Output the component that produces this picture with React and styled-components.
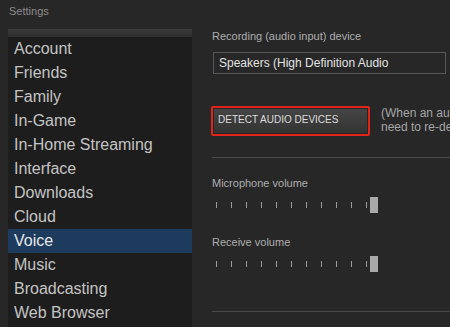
import React from 'react';
import styled, { createGlobalStyle } from 'styled-components';

const GlobalStyle = createGlobalStyle`
  html, body {
    margin: 0;
    padding: 0;
    background: #272727;
    overflow: hidden;
  }
  body {
    font-family: "Liberation Sans", Arial, sans-serif;
  }
`;

const Window = styled.div`
  width: 450px;
  height: 327px;
  background: #272727;
  display: flex;
  flex-direction: column;
  overflow: hidden;
`;

const TitleBar = styled.div`
  height: 29px;
  padding: 5px 0 0 9px;
  box-sizing: border-box;
  font-size: 11px;
  color: #8c8c8c;
`;

const Body = styled.div`
  display: flex;
  flex: 1;
  min-height: 0;
`;

const Sidebar = styled.div`
  width: 184px;
  margin-left: 8px;
  background: #1d1d1d;
  display: flex;
  flex-direction: column;
  flex-shrink: 0;
`;

const SidebarTop = styled.div`
  height: 8px;
  background: linear-gradient(#3a3a3a, #2e2e2e);
`;

const NavItem = styled.div`
  height: 24px;
  line-height: 24px;
  padding-left: 6px;
  font-size: 16px;
  color: ${({ active }) => (active ? '#e8e8e8' : '#c4c4c4')};
  background: ${({ active }) => (active ? '#1d3b5c' : 'transparent')};
  white-space: nowrap;
`;

const Content = styled.div`
  flex: 1;
  padding: 1px 0 0 20px;
  display: flex;
  flex-direction: column;
  min-width: 0;
  overflow: hidden;
`;

const Label = styled.div`
  font-size: 11px;
  color: #aeaeae;
  white-space: nowrap;
  margin-top: ${({ top }) => top || 0}px;
`;

const Select = styled.div`
  margin: 10px 0 0 1px;
  height: 22px;
  width: 233px;
  flex-shrink: 0;
  box-sizing: border-box;
  border: 1px solid #575757;
  padding-left: 5px;
  line-height: 20px;
  font-size: 12px;
  color: #e2e2e2;
  white-space: nowrap;
`;

const ButtonRow = styled.div`
  display: flex;
  align-items: center;
  margin-top: 32px;
  gap: 11px;
`;

const Highlight = styled.div`
  border: 2px solid #e2231a;
  border-radius: 2px;
  padding: 1px;
  width: 159px;
  height: 30px;
  box-sizing: border-box;
  margin-left: -1px;
  flex-shrink: 0;
`;

const DetectButton = styled.div`
  height: 100%;
  background: linear-gradient(#454545, #333333);
  color: #dcdcdc;
  font-size: 10px;
  padding: 0 0 4px 4px;
  display: flex;
  align-items: center;
  box-sizing: border-box;
  white-space: nowrap;
`;

const Note = styled.div`
  font-size: 12px;
  line-height: 14px;
  color: #a5a5a5;
  white-space: nowrap;
  margin-top: -2px;
`;

const Divider = styled.div`
  height: 1px;
  flex-shrink: 0;
  background: #4a4a4a;
  margin-top: ${({ top }) => top}px;
`;

const Slider = styled.div`
  display: flex;
  align-items: center;
  margin: 8px 0 0 4px;
  height: 16px;
  flex-shrink: 0;
`;

const Tick = styled.div`
  width: 1px;
  height: 6px;
  background: #9a9a9a;
  margin-right: 14px;
`;

const Handle = styled.div`
  width: 8px;
  height: 16px;
  background: #a9a9a9;
  margin-left: -11px;
`;

const navItems = [
  'Account',
  'Friends',
  'Family',
  'In-Game',
  'In-Home Streaming',
  'Interface',
  'Downloads',
  'Cloud',
  'Voice',
  'Music',
  'Broadcasting',
  'Web Browser',
];

const VolumeSlider = () => (
  <Slider>
    {Array.from({ length: 11 }).map((_, i) => (
      <Tick key={i} />
    ))}
    <Handle />
  </Slider>
);

export default function App() {
  return (
    <>
      <GlobalStyle />
      <Window>
        <TitleBar>Settings</TitleBar>
        <Body>
          <Sidebar>
            <SidebarTop />
            {navItems.map((item) => (
              <NavItem key={item} active={item === 'Voice'}>
                {item}
              </NavItem>
            ))}
          </Sidebar>
          <Content>
            <Label>Recording (audio input) device</Label>
            <Select>Speakers (High Definition Audio</Select>
            <ButtonRow>
              <Highlight>
                <DetectButton>DETECT AUDIO DEVICES</DetectButton>
              </Highlight>
              <Note>
                (When an audio device is added or removed you may
                <br />
                need to re-detect devices)
              </Note>
            </ButtonRow>
            <Divider top={21} />
            <Label top={19}>Microphone volume</Label>
            <VolumeSlider />
            <Label top={23}>Receive volume</Label>
            <VolumeSlider />
            <Divider top={39} />
          </Content>
        </Body>
      </Window>
    </>
  );
}
